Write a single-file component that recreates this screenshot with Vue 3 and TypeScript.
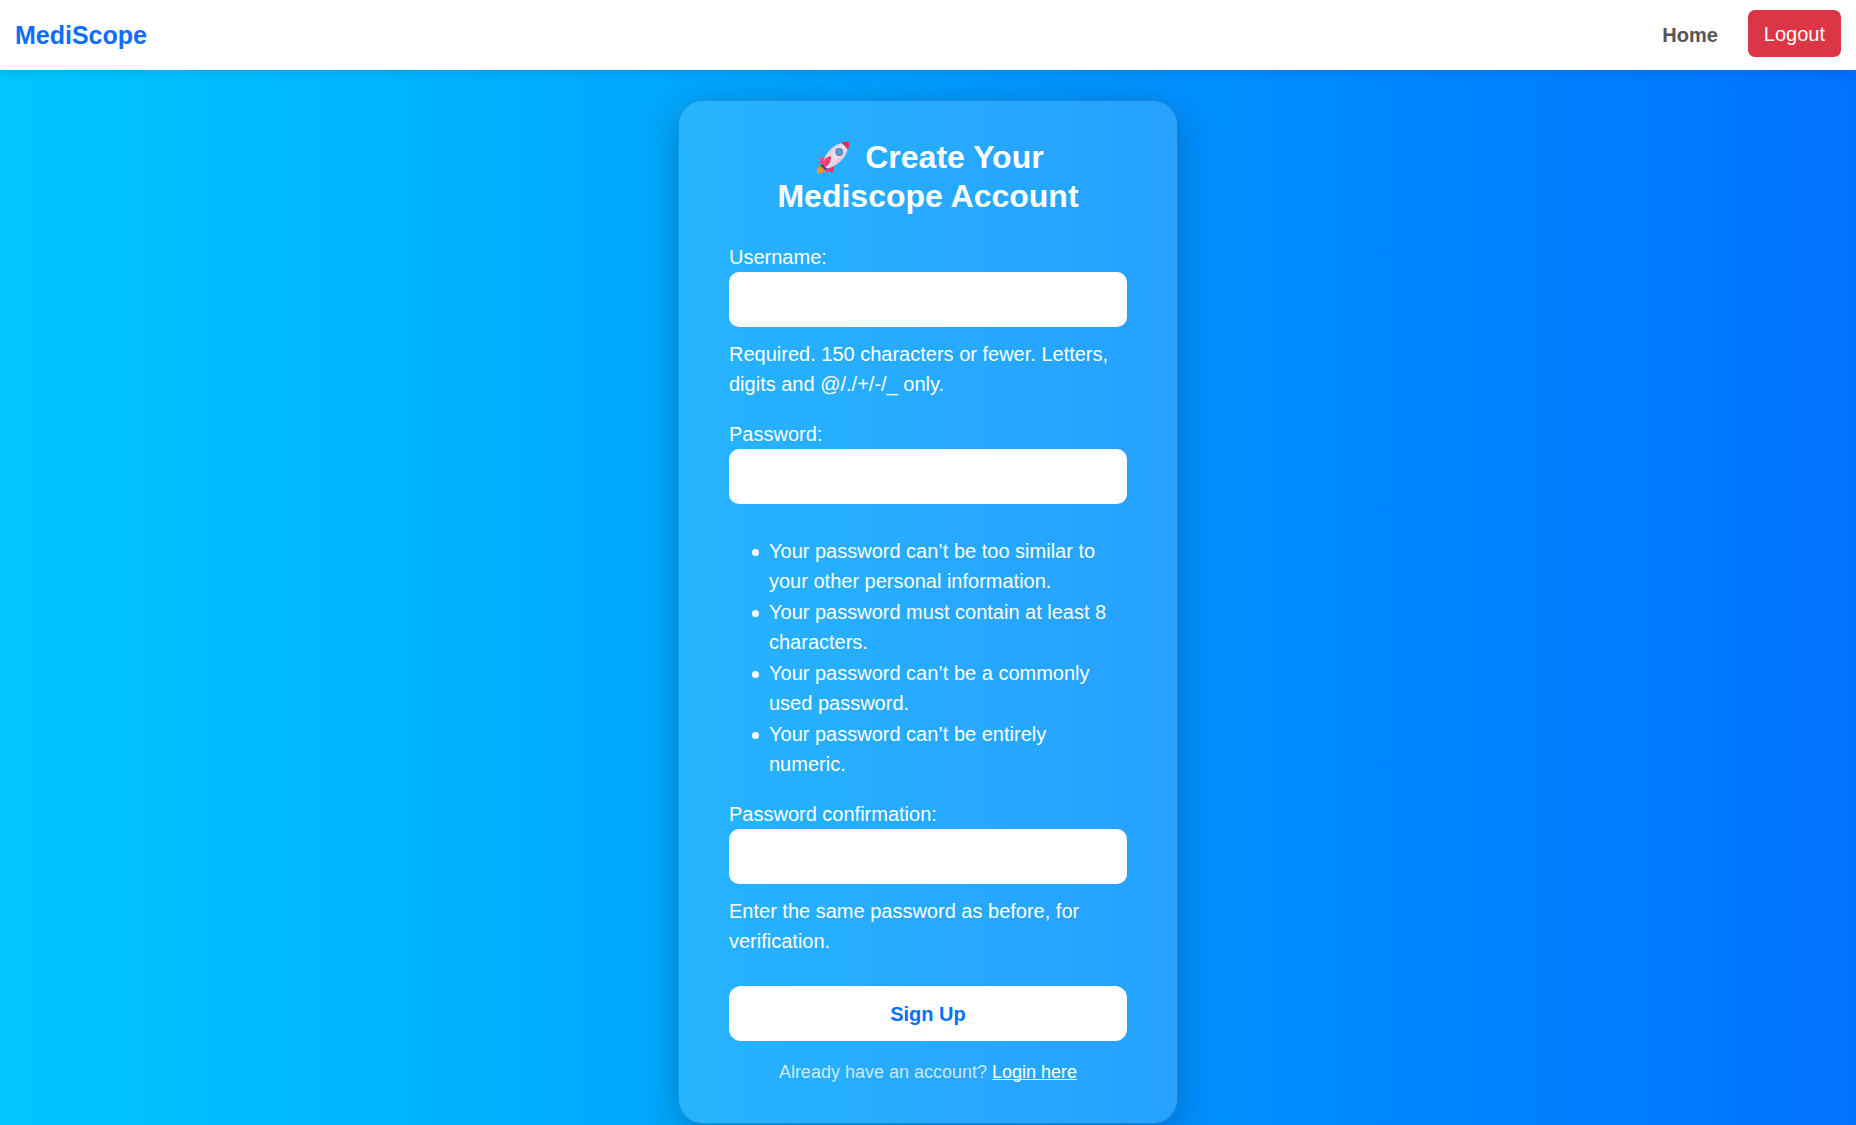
<script setup lang="ts">
import { reactive } from 'vue'

interface Field {
  id: 'username' | 'password1' | 'password2'
  label: string
  type: string
  help?: string
  rules?: string[]
}

const fields: Field[] = [
  {
    id: 'username',
    label: 'Username:',
    type: 'text',
    help: 'Required. 150 characters or fewer. Letters, digits and @/./+/-/_ only.',
  },
  {
    id: 'password1',
    label: 'Password:',
    type: 'password',
    rules: [
      'Your password can’t be too similar to your other personal information.',
      'Your password must contain at least 8 characters.',
      'Your password can’t be a commonly used password.',
      'Your password can’t be entirely numeric.',
    ],
  },
  {
    id: 'password2',
    label: 'Password confirmation:',
    type: 'password',
    help: 'Enter the same password as before, for verification.',
  },
]

const form = reactive({ username: '', password1: '', password2: '' })
</script>

<template>
  <div class="page">
    <header class="navbar">
      <a class="brand" href="#">MediScope</a>
      <nav class="links">
        <a class="home" href="#">Home</a>
        <button class="logout" type="button">Logout</button>
      </nav>
    </header>

    <main class="content">
      <section class="card">
        <h1 class="title">
          <svg class="rocket" viewBox="0 0 36 36" aria-hidden="true">
            <defs>
              <linearGradient id="hull" x1="0" y1="0" x2="1" y2="1">
                <stop offset="0.2" stop-color="#d5cddd" />
                <stop offset="0.5" stop-color="#ebe2ee" />
                <stop offset="0.85" stop-color="#cbbbd9" />
              </linearGradient>
              <linearGradient id="fin" x1="0" y1="0" x2="1" y2="1">
                <stop offset="0" stop-color="#ff5c86" />
                <stop offset="1" stop-color="#ec1f58" />
              </linearGradient>
              <linearGradient id="flame" x1="1" y1="0" x2="0" y2="1">
                <stop offset="0" stop-color="#d9783c" />
                <stop offset="1" stop-color="#ff9f2e" />
              </linearGradient>
            </defs>
            <path d="M6.500 25.500C3 26 1.600 29 2 33c4 .6 7.600-.6 9-3.500z" fill="url(#flame)" />
            <path d="M12 17.500 3.200 17.200 6 20 3.600 23.300 9 24z" fill="url(#fin)" />
            <path d="m18.800 20.500.2 8.500-2 4.300-2.200-2.600-3.800 1.800-1-5z" fill="url(#fin)" />
            <path d="m7.500 23.800 4.800 5-1.800 1.700-5-4.700z" fill="#4d4675" />
            <path d="M7.500 24C9.500 14.500 16.500 5.500 26.500 3l6.200 6.200C30.500 18.500 22.500 26 12 28.600z" fill="url(#hull)" />
            <path d="M26 3.100C29 1.500 32 1.500 34 2.200c.5 2.200.2 4.800-1.400 7.400-1.400-3-3.600-5.200-6.600-6.500z" fill="#ee2b4f" />
            <path d="M7.500 24c.6-3.800 3-7 8.700-7.900-.3 5.200-2.100 9.500-6.200 10.900z" fill="url(#fin)" />
            <circle cx="24.200" cy="12" r="3.900" fill="#737b9d" />
            <circle cx="24.200" cy="12" r="2.700" fill="#4e9df2" />
          </svg>
          Create Your Mediscope Account
        </h1>

        <form class="form" @submit.prevent>
          <div v-for="field in fields" :key="field.id" class="field">
            <label :for="field.id">{{ field.label }}</label>
            <input :id="field.id" v-model="form[field.id]" :name="field.id" :type="field.type" />
            <p v-if="field.help" class="help">{{ field.help }}</p>
            <ul v-if="field.rules" class="rules">
              <li v-for="rule in field.rules" :key="rule">{{ rule }}</li>
            </ul>
          </div>
          <button class="submit" type="submit">Sign Up</button>
        </form>

        <p class="footer">Already have an account? <a href="#">Login here</a></p>
      </section>
    </main>
  </div>
</template>

<style>
body {
  margin: 0;
}
</style>

<style scoped>
.page {
  box-sizing: border-box;
  display: flex;
  flex-direction: column;
  min-height: 100vh;
  background: linear-gradient(to right, #00c6ff, #0072ff);
  color: #fff;
  font-family: 'Liberation Sans', Arial, sans-serif;
  font-size: 20px;
  line-height: 30px;
}

.navbar {
  box-sizing: border-box;
  display: flex;
  align-items: center;
  justify-content: space-between;
  min-height: 70px;
  padding: 10px 15px;
  background: #fff;
  box-shadow: 0 2px 10px rgba(0, 0, 0, 0.1);
}

.brand {
  color: #0d6efd;
  font-size: 25px;
  font-weight: 700;
  text-decoration: none;
}

.links {
  display: flex;
  align-items: center;
  gap: 30px;
}

.home {
  color: #555;
  font-weight: 700;
  text-decoration: none;
}

.logout {
  height: 47px;
  margin-bottom: 3px;
  padding: 0 16px;
  border: 0;
  border-radius: 7px;
  background: #dc3545;
  color: #fff;
  font: inherit;
}

.content {
  display: flex;
  justify-content: center;
  padding-top: 30px;
}

.card {
  box-sizing: border-box;
  width: 500px;
  max-width: 100%;
  padding: 37px 50px;
  border: 1px solid rgba(0, 0, 0, 0.175);
  border-radius: 25px;
  background: rgba(255, 255, 255, 0.15);
  box-shadow: 0 10px 40px rgba(0, 0, 0, 0.25);
}

.title {
  margin: 0 0 26px;
  font-size: 32px;
  font-weight: 700;
  line-height: 39px;
  text-align: center;
}

.rocket {
  width: 36px;
  height: 36px;
  margin: 0 5px 0 3px;
  vertical-align: -8px;
}

.form {
  display: flex;
  flex-direction: column;
}

.field {
  display: flex;
  flex-direction: column;
  margin-bottom: 20px;
}

.field input {
  box-sizing: border-box;
  width: 100%;
  height: 55px;
  padding: 12px;
  border: 0;
  border-radius: 10px;
  background: #fff;
  color: #212529;
  font: inherit;
}

.help {
  margin: 12px 0 0;
}

.rules {
  display: flex;
  flex-direction: column;
  gap: 1px;
  margin: 32px 0 0;
  padding-left: 40px;
  list-style: none;
}

.rules li {
  display: flex;
}

.rules li::before {
  content: '';
  flex: none;
  width: 7px;
  height: 7px;
  margin: 13px 10px 0 -17px;
  border-radius: 50%;
  background: currentColor;
}

.submit {
  height: 55px;
  margin-top: 10px;
  border: 0;
  border-radius: 12px;
  background: #fff;
  color: #0072ff;
  font: inherit;
  font-weight: 700;
}

.footer {
  margin: 18px 0 0;
  color: rgba(255, 255, 255, 0.75);
  font-size: 18px;
  line-height: 27px;
  text-align: center;
}

.footer a {
  color: #fff;
  text-decoration-skip-ink: none;
}
</style>
